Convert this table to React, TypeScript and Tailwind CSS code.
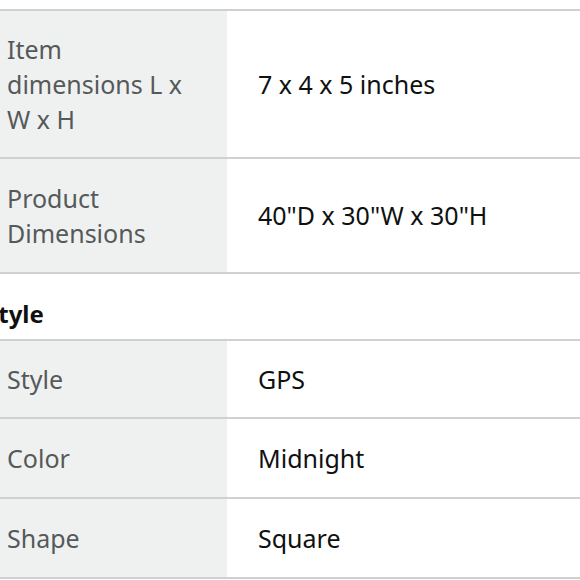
import React from "react";

interface Row {
  label: string;
  value: string;
  height: string;
}

const sizeRows: Row[] = [
  { label: "Item dimensions L x W x H", value: "7 x 4 x 5 inches", height: "h-[148px]" },
  { label: "Product Dimensions", value: "40\"D x 30\"W x 30\"H", height: "h-[115px]" },
];

const styleRows: Row[] = [
  { label: "Style", value: "GPS", height: "h-[78px]" },
  { label: "Color", value: "Midnight", height: "h-[80px]" },
  { label: "Shape", value: "Square", height: "h-[80px]" },
];

function SpecTable({ rows }: { rows: Row[] }) {
  return (
    <div className="border-t-2 border-[#cfd1d1]">
      {rows.map((row) => (
        <div
          key={row.label}
          className={`flex border-b-2 border-[#cfd1d1] ${row.height}`}
        >
          <div className="flex w-[227px] shrink-0 items-center bg-[#eff1f1] pl-[7px] pr-[30px] text-[#565959]">
            {row.label}
          </div>
          <div className="flex flex-1 items-center pl-[31px] text-[#0f1111]">
            {row.value}
          </div>
        </div>
      ))}
    </div>
  );
}

export default function App() {
  return (
    <div
      className="h-[580px] w-[580px] overflow-hidden bg-white pt-[9px] text-[25px] leading-[35px]"
      style={{ fontFamily: '"Noto Sans", "Open Sans", sans-serif' }}
    >
      <SpecTable rows={sizeRows} />
      <div className="flex h-[65px] items-end pb-[8px]">
        <h2 className="ml-[-15px] text-[24px] font-bold text-[#0f1111]">Style</h2>
      </div>
      <SpecTable rows={styleRows} />
    </div>
  );
}
